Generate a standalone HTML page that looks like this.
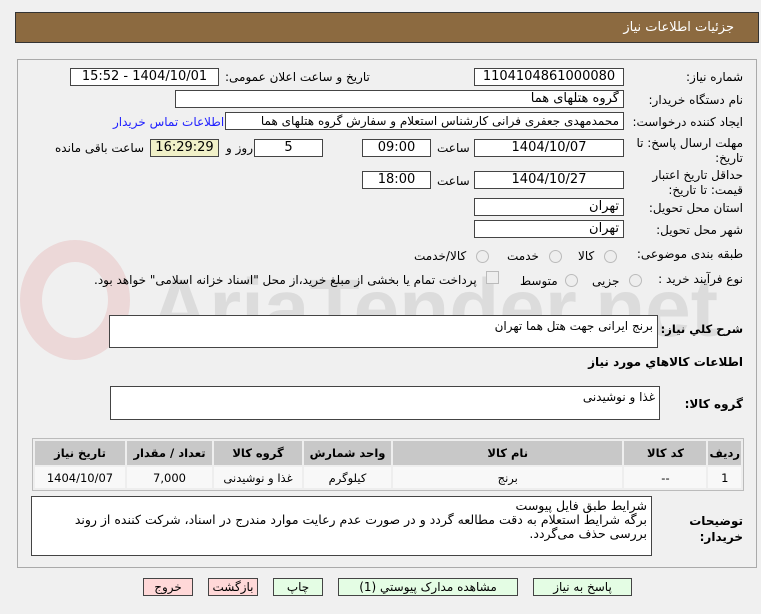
<!DOCTYPE html><html><head><meta charset="utf-8"><style>
body{margin:0;width:761px;height:614px;background:#f0f0f0;font-family:Tahoma,"DejaVu Sans","Noto Sans CJK SC",sans-serif;font-size:12px;position:relative;overflow:hidden;direction:rtl}
.a{position:absolute}
.hd{left:15px;top:12px;width:744px;height:31px;background:#8c6a40;border:1px solid #333;box-sizing:border-box;color:#fff;font-size:13px}
.pn{left:17px;top:59px;width:740px;height:509px;border:1px solid #aaa;box-sizing:border-box}
.bx{background:#fff;border:1px solid #444;box-sizing:border-box;height:18px;line-height:16px;text-align:center;font-size:13px;white-space:nowrap;overflow:hidden}
.l{white-space:nowrap;font-size:12px}
.ta{background:#fff;border:1px solid #444;box-sizing:border-box;padding:3px 4px;text-align:right;font-size:11.5px}
.rd{width:11px;height:11px;border:1px solid #bbb;border-radius:50%;background:#eee}
table{border-collapse:separate;border-spacing:2px;background:#eee;border:1px solid #bbb;font-size:11.5px}
th{background:#c8c8c8;height:22px;font-weight:bold}
td{background:#f8f8f8;height:19px;text-align:center}
.bt{height:18px;border:1px solid #444;box-sizing:border-box;text-align:center;line-height:16px;font-size:12px}
</style></head><body>
<div class="a hd"><span class="a" style="right:24px;top:7px">جزئیات اطلاعات نیاز</span></div>
<div class="a pn"></div>
<div class="a" style="left:20px;top:240px;width:110px;height:120px;border:22px solid rgba(220,120,120,.2);border-radius:50%;box-sizing:border-box"></div>
<div class="a" style="left:150px;top:262px;font-size:82px;font-weight:bold;color:rgba(150,150,150,.22);direction:ltr;font-family:'Liberation Sans',sans-serif">AriaTender.net</div>

<span class="a l" style="right:18px;top:70px">شماره نیاز:</span>
<div class="a bx" style="left:474px;top:68px;width:150px">1104104861000080</div>
<span class="a l" style="left:225px;top:70px">تاریخ و ساعت اعلان عمومی:</span>
<div class="a bx" style="left:70px;top:68px;width:149px">1404/10/01 - 15:52</div>

<span class="a l" style="right:18px;top:93px">نام دستگاه خریدار:</span>
<div class="a bx" style="left:175px;top:90px;width:449px;text-align:right;padding-right:4px">گروه هتلهای هما</div>

<span class="a l" style="right:18px;top:115px">ایجاد کننده درخواست:</span>
<div class="a bx" style="left:225px;top:112px;width:399px;text-align:right;padding-right:4px;font-size:12px">محمدمهدی جعفری فرانی کارشناس استعلام و سفارش گروه هتلهای هما</div>
<span class="a l" style="left:113px;top:115px;color:#2020ff">اطلاعات تماس خریدار</span>

<span class="a l" style="right:18px;top:136px;line-height:15px">مهلت ارسال پاسخ: تا<br>تاریخ:</span>
<div class="a bx" style="left:474px;top:139px;width:150px">1404/10/07</div>
<span class="a l" style="left:437px;top:141px">ساعت</span>
<div class="a bx" style="left:362px;top:139px;width:69px">09:00</div>
<div class="a bx" style="left:254px;top:139px;width:69px">5</div>
<span class="a l" style="left:226px;top:141px">روز و</span>
<div class="a bx" style="left:150px;top:139px;width:69px;background:#f0f0c8">16:29:29</div>
<span class="a l" style="left:55px;top:141px">ساعت باقی مانده</span>

<span class="a l" style="right:18px;top:168px;line-height:15px">حداقل تاریخ اعتبار<br>قیمت: تا تاریخ:</span>
<div class="a bx" style="left:474px;top:171px;width:150px">1404/10/27</div>
<span class="a l" style="left:437px;top:174px">ساعت</span>
<div class="a bx" style="left:362px;top:171px;width:69px">18:00</div>

<span class="a l" style="right:18px;top:201px">استان محل تحویل:</span>
<div class="a bx" style="left:474px;top:198px;width:150px;text-align:right;padding-right:4px">تهران</div>
<span class="a l" style="right:18px;top:223px">شهر محل تحویل:</span>
<div class="a bx" style="left:474px;top:220px;width:150px;text-align:right;padding-right:4px">تهران</div>

<span class="a l" style="right:18px;top:247px">طبقه بندی موضوعی:</span>
<div class="a rd" style="left:604px;top:250px"></div><span class="a l" style="left:578px;top:249px">کالا</span>
<div class="a rd" style="left:549px;top:250px"></div><span class="a l" style="left:507px;top:249px">خدمت</span>
<div class="a rd" style="left:476px;top:250px"></div><span class="a l" style="left:414px;top:249px">کالا/خدمت</span>

<span class="a l" style="right:18px;top:272px">نوع فرآیند خرید :</span>
<div class="a rd" style="left:629px;top:274px"></div><span class="a l" style="left:592px;top:274px">جزیی</span>
<div class="a rd" style="left:565px;top:274px"></div><span class="a l" style="left:520px;top:274px">متوسط</span>
<div class="a" style="left:486px;top:271px;width:11px;height:11px;border:1px solid #bbb;background:#eee"></div>
<span class="a l" style="left:94px;top:273px;font-size:12px">پرداخت تمام یا بخشی از مبلغ خرید،از محل "اسناد خزانه اسلامی" خواهد بود.</span>

<span class="a l" style="right:18px;top:322px;font-weight:bold;font-size:11.5px">شرح کلي نياز:</span>
<div class="a ta" style="left:109px;top:315px;width:549px;height:33px;font-size:12px">برنج ایرانی جهت هتل هما تهران</div>
<span class="a l" style="right:18px;top:355px;font-weight:bold">اطلاعات کالاهاي مورد نياز</span>
<span class="a l" style="right:18px;top:397px;font-weight:bold">گروه کالا:</span>
<div class="a ta" style="left:110px;top:386px;width:550px;height:34px;font-size:12px">غذا و نوشیدنی</div>

<table class="a" style="left:32px;top:438px;width:712px">
<tr><th style="width:30px">رديف</th><th style="width:80px">کد کالا</th><th>نام کالا</th><th style="width:85px">واحد شمارش</th><th style="width:86px">گروه کالا</th><th style="width:83px">تعداد / مقدار</th><th style="width:88px">تاریخ نیاز</th></tr>
<tr><td>1</td><td>--</td><td>برنج</td><td>کیلوگرم</td><td>غذا و نوشیدنی</td><td>7,000</td><td>1404/10/07</td></tr>
</table>

<span class="a l" style="right:18px;top:513px;font-weight:bold;line-height:16px">توضیحات<br>خریدار:</span>
<div class="a ta" style="left:31px;top:496px;width:621px;height:60px;line-height:14px;padding-top:2px;font-size:12.5px">شرایط طبق فایل پیوست<br>برگه شرایط استعلام به دقت مطالعه گردد و در صورت عدم رعایت موارد مندرج در اسناد، شرکت کننده از روند بررسی حذف می‌گردد.</div>

<div class="a bt" style="left:143px;top:578px;width:50px;background:#ffd8d8">خروج</div>
<div class="a bt" style="left:208px;top:578px;width:50px;background:#ffd8d8">بازگشت</div>
<div class="a bt" style="left:273px;top:578px;width:50px;background:#e4fde4">چاپ</div>
<div class="a bt" style="left:338px;top:578px;width:180px;background:#e4fde4">مشاهده مدارک پیوستي (1)</div>
<div class="a bt" style="left:533px;top:578px;width:99px;background:#e4fde4">پاسخ به نیاز</div>
</body></html>
